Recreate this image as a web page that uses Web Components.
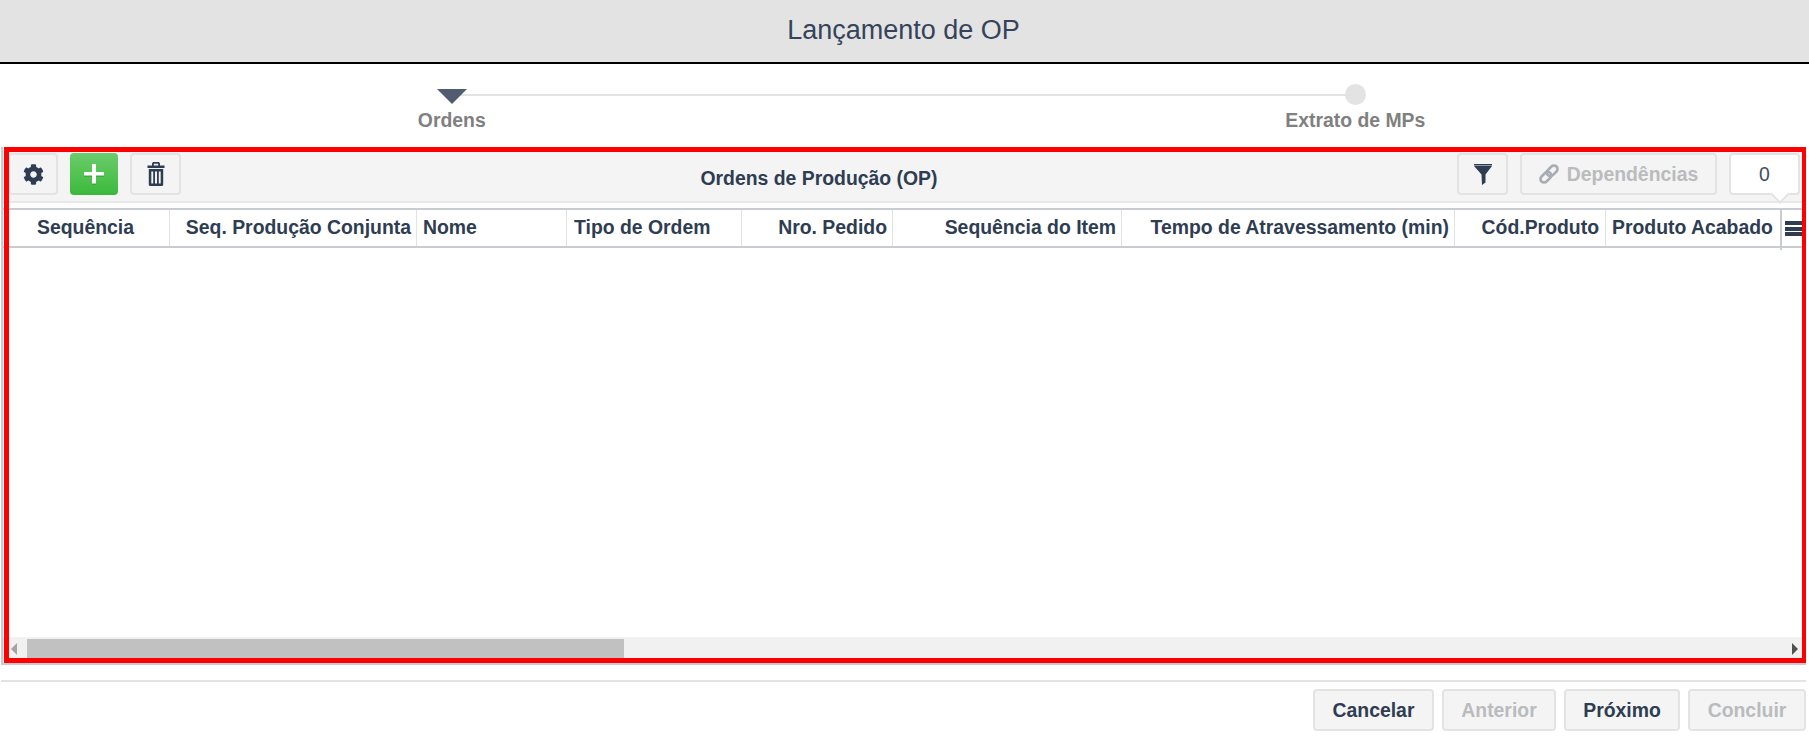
<!DOCTYPE html>
<html lang="pt-BR">
<head>
<meta charset="utf-8">
<title>Lançamento de OP</title>
<style>
  html, body { margin: 0; height: 745px; overflow: hidden; background: #fff; }
  body { font-family: "Liberation Sans", Arial, sans-serif; color: #2e3d52; }
</style>
</head>
<body>
<op-title-bar>Lançamento de OP</op-title-bar>
<op-stepper></op-stepper>
<op-grid-panel heading="Ordens de Produção (OP)"></op-grid-panel>
<op-footer></op-footer>

<script>
const ICONS = {
  gear: `<svg viewBox="0 0 512 512" width="21" height="21"><path fill="currentColor" d="M487.4 315.7l-42.6-24.6c4.3-23.2 4.3-47 0-70.2l42.6-24.6c4.9-2.8 7.1-8.6 5.5-14-11.1-35.6-30-67.8-54.7-94.6-3.8-4.1-10-5.1-14.8-2.3L380.8 110c-17.9-15.4-38.5-27.3-60.8-35.1V25.8c0-5.6-3.9-10.5-9.4-11.7-36.7-8.2-74.3-7.8-109.2 0-5.5 1.2-9.4 6.1-9.4 11.7V75c-22.2 7.9-42.8 19.8-60.8 35.1L88.7 85.5c-4.9-2.8-11-1.9-14.8 2.3-24.7 26.7-43.6 58.9-54.7 94.6-1.7 5.4.6 11.2 5.5 14L67.3 221c-4.3 23.2-4.3 47 0 70.2l-42.6 24.6c-4.9 2.8-7.1 8.6-5.5 14 11.1 35.6 30 67.8 54.7 94.6 3.8 4.1 10 5.1 14.8 2.3l42.6-24.6c17.9 15.4 38.5 27.3 60.8 35.1v49.2c0 5.6 3.9 10.5 9.4 11.7 36.7 8.2 74.3 7.8 109.2 0 5.5-1.2 9.4-6.1 9.4-11.7v-49.2c22.2-7.9 42.8-19.8 60.8-35.1l42.6 24.6c4.9 2.8 11 1.9 14.8-2.3 24.7-26.7 43.6-58.9 54.7-94.6 1.5-5.5-.7-11.3-5.6-14.1zM256 336c-44.1 0-80-35.9-80-80s35.9-80 80-80 80 35.9 80 80-35.9 80-80 80z"/></svg>`,
  plus: `<svg viewBox="0 0 22 24" width="22" height="24"><path fill="#2f9a2f" opacity=".55" d="M9 3h4v7h8v4h-8V22H9V14H1v-4h8z" transform="translate(0 1)"/><path fill="#fff" d="M9 2h4v8h8v3.500h-8V21.500H9V13.500H1V10h8z"/></svg>`,
  trash: `<svg viewBox="0 0 18 24" width="18" height="24"><path fill="currentColor" fill-rule="evenodd" d="M6 0h6l1 1.500V3.500h4.500V6H.5V3.500H5V1.500zM6.800 1.700v1.800h4.400V1.700zM1.800 7h14.400v15.500a1.500 1.500 0 0 1-1.500 1.500H3.300a1.500 1.500 0 0 1-1.500-1.500zM4.300 9.500v12h1.900v-12zM8 9.500v12h2v-12zM11.800 9.500v12h1.900v-12z"/></svg>`,
  filter: `<svg viewBox="0 0 18 21" width="18" height="21"><path fill="currentColor" d="M0 0h18v1.400H0zM0 1.900h18l-6.500 8.500v8l-3.500 2.600-.5-10.600z"/></svg>`,
  link: `<svg viewBox="0 0 18 18" width="20" height="20"><g fill="none" stroke="#a9adb3" stroke-width="2.400" transform="rotate(-45 9 9)"><rect x="-.5" y="5.800" width="11" height="6.400" rx="3.200"/><rect x="7.500" y="5.800" width="11" height="6.400" rx="3.200"/></g></svg>`
};

class OpTitleBar extends HTMLElement {
  connectedCallback() {
    this.attachShadow({ mode: "open" }).innerHTML = `
      <style>
        :host {
          display: flex; align-items: center; justify-content: center;
          height: 62px; box-sizing: content-box;
          padding-right: 2px; width: calc(100% - 2px);
          background: #e3e3e3;
          border-bottom: 2px solid #000;
          font-size: 27px;
          color: #36435a;
        }
        span { margin-bottom: 2px; }
      </style>
      <span><slot></slot></span>`;
  }
}

class OpStepper extends HTMLElement {
  connectedCallback() {
    this.attachShadow({ mode: "open" }).innerHTML = `
      <style>
        :host {
          display: grid; grid-template-columns: 1fr 1fr;
          position: relative;
          width: 1807px; height: 83px;
          font-weight: 700; font-size: 19.4px; color: #808080;
        }
        :host::before {
          content: ""; position: absolute;
          left: 25%; right: 25%; top: 30px; height: 2px;
          background: #e3e3e3;
        }
        .step { display: flex; flex-direction: column; align-items: center; position: relative; }
        .mark { height: 21px; margin-top: 20px; display: flex; align-items: center; }
        .tri { width: 0; height: 0; border-left: 15px solid transparent; border-right: 15px solid transparent; border-top: 15px solid #515c70; margin-top: 3px; }
        .dot { width: 21px; height: 21px; border-radius: 50%; background: #e3e3e3; }
        .lbl { margin-top: 4px; line-height: 22px; }
      </style>
      <div class="step"><div class="mark"><div class="tri"></div></div><div class="lbl">Ordens</div></div>
      <div class="step"><div class="mark"><div class="dot"></div></div><div class="lbl">Extrato de MPs</div></div>`;
  }
}

class OpButton extends HTMLElement {
  connectedCallback() {
    this.attachShadow({ mode: "open" }).innerHTML = `
      <style>
        :host {
          display: inline-flex; align-items: center; justify-content: center; gap: 10px;
          box-sizing: border-box; height: 42px;
          background: #f4f4f4;
          border: 2px solid #e3e3e3; border-radius: 4px;
          font-weight: 700; font-size: 19.4px; color: #2e3d52;
        }
        :host([disabled]) { color: #b9bbbd; }
        :host([primary]) {
          border: 0;
          background: linear-gradient(#6bcc6b, #3bb93b);
        }
      </style>
      <slot></slot>`;
  }
}

class OpGridHeader extends HTMLElement {
  connectedCallback() {
    const cols = [
      ["Sequência", 167, "center", "padding-right:7px"],
      ["Seq. Produção Conjunta", 247, "right"],
      ["Nome", 150, "left"],
      ["Tipo de Ordem", 175, "left", "padding-left:7px"],
      ["Nro. Pedido", 151, "right"],
      ["Sequência do Item", 229, "right"],
      ["Tempo de Atravessamento (min)", 333, "right"],
      ["Cód.Produto", 151, "right", "padding-right:6px"],
      ["Produto Acabado", 175, "left"]
    ];
    const cells = cols.map(([t, w, a, extra = ""]) =>
      `<div class="cell ${a}" style="width:${w}px;${extra}">${t}</div>`).join("");
    this.attachShadow({ mode: "open" }).innerHTML = `
      <style>
        :host {
          display: flex; height: 40px; box-sizing: border-box;
          border-top: 2px solid #c8cbcf;
          border-bottom: 2px solid #c8cbcf;
          font-weight: 700; font-size: 19.4px; color: #2e3d52;
        }
        .cell {
          box-sizing: border-box; flex: none;
          display: flex; align-items: center; white-space: nowrap;
          padding: 0 5px 2px 6px;
          border-right: 1px solid #e3e3e3;
        }
        .center { justify-content: center; }
        .right { justify-content: flex-end; }
        .left { justify-content: flex-start; }
        .menu { flex: none; position: relative; width: 24px; border-left: 2px solid #c8cbcf; margin-left: -1px; display: flex; align-items: center; padding-left: 3px; box-sizing: border-box; }
        .menu::after { content: ""; position: absolute; left: -2px; top: 100%; width: 2px; height: 4px; background: #c8cbcf; }
        .bars { width: 17px; height: 15px; background: linear-gradient(#2e3d52 0 4px, transparent 4px 5.500px, #2e3d52 5.500px 9.500px, transparent 9.500px 11px, #2e3d52 11px); }
      </style>
      ${cells}
      <div class="menu"><div class="bars"></div></div>`;
  }
}

class OpScrollbar extends HTMLElement {
  connectedCallback() {
    this.attachShadow({ mode: "open" }).innerHTML = `
      <style>
        :host {
          display: flex; align-items: flex-end; justify-content: space-between;
          position: relative;
          height: 26px; background: #f1f1f1;
        }
        .thumb { position: absolute; left: 24px; width: 597px; top: 2px; bottom: 5px; background: #c1c1c1; }
        .arr { width: 0; height: 0; border-top: 6px solid transparent; border-bottom: 6px solid transparent; margin-bottom: 8px; }
        .l { border-right: 6px solid #a3a3a3; margin-left: 8px; }
        .r { border-left: 6px solid #505050; margin-right: 8px; }
      </style>
      <div class="arr l"></div><div class="thumb"></div><div class="arr r"></div>`;
  }
}

class OpGridPanel extends HTMLElement {
  connectedCallback() {
    this.attachShadow({ mode: "open" }).innerHTML = `
      <style>
        :host {
          display: flex; flex-direction: column;
          position: relative; box-sizing: border-box;
          width: 1805px; height: 518px; margin-left: 1px;
          border-left: 2px solid #c8cbcf;
          border-bottom: 2px solid #c8cbcf;
        }
        .toolbar {
          display: flex; align-items: flex-start; gap: 12px;
          height: 56px; box-sizing: border-box;
          padding: 6px 6px 0 5px;
          background: #f4f4f4;
          border-bottom: 2px solid #e8e8e8;
        }
        .title { flex: 1; text-align: center; font-weight: 700; font-size: 19.4px; padding-top: 14px; color: #2e3d52; }
        .count {
          position: relative; box-sizing: border-box;
          width: 71px; height: 42px;
          background: #fff; border: 2px solid #e3e3e3; border-radius: 4px;
          display: flex; align-items: center; justify-content: center;
          font-size: 19.4px; color: #424e60;
        }
        .count::after {
          content: ""; position: absolute; right: 11px; bottom: -8px;
          width: 12px; height: 12px; transform: rotate(45deg);
          background: #fff;
          border-right: 2px solid #e3e3e3; border-bottom: 2px solid #e3e3e3;
        }
        .gap { height: 5px; }
        .body { flex: 1; background: #fff; }
        .mark { position: absolute; left: 1px; top: 0; right: 0; bottom: 0; border: 5px solid #f00; border-right-width: 4px; pointer-events: none; }
      </style>
      <div class="toolbar">
        <op-button style="width:50px">${ICONS.gear}</op-button>
        <op-button primary style="width:48px">${ICONS.plus}</op-button>
        <op-button style="width:51px">${ICONS.trash}</op-button>
        <div class="title">${this.getAttribute("heading")}</div>
        <op-button style="width:51px">${ICONS.filter}</op-button>
        <op-button disabled style="width:197px;gap:8px">${ICONS.link}Dependências</op-button>
        <div class="count">0</div>
      </div>
      <div class="gap"></div>
      <op-grid-header></op-grid-header>
      <div class="body"></div>
      <op-scrollbar></op-scrollbar>
      <div class="mark"></div>`;
  }
}

class OpFooter extends HTMLElement {
  connectedCallback() {
    this.attachShadow({ mode: "open" }).innerHTML = `
      <style>
        :host {
          display: flex; justify-content: flex-end; gap: 8px;
          box-sizing: border-box; width: 1805px; margin: 15px 0 0 1px;
          padding-top: 7px;
          border-top: 2px solid #e3e3e3;
        }
      </style>
      <op-button style="width:121px">Cancelar</op-button>
      <op-button disabled style="width:114px">Anterior</op-button>
      <op-button style="width:116px">Próximo</op-button>
      <op-button disabled style="width:118px">Concluir</op-button>`;
  }
}

customElements.define("op-title-bar", OpTitleBar);
customElements.define("op-stepper", OpStepper);
customElements.define("op-button", OpButton);
customElements.define("op-grid-header", OpGridHeader);
customElements.define("op-scrollbar", OpScrollbar);
customElements.define("op-grid-panel", OpGridPanel);
customElements.define("op-footer", OpFooter);
</script>
</body>
</html>
